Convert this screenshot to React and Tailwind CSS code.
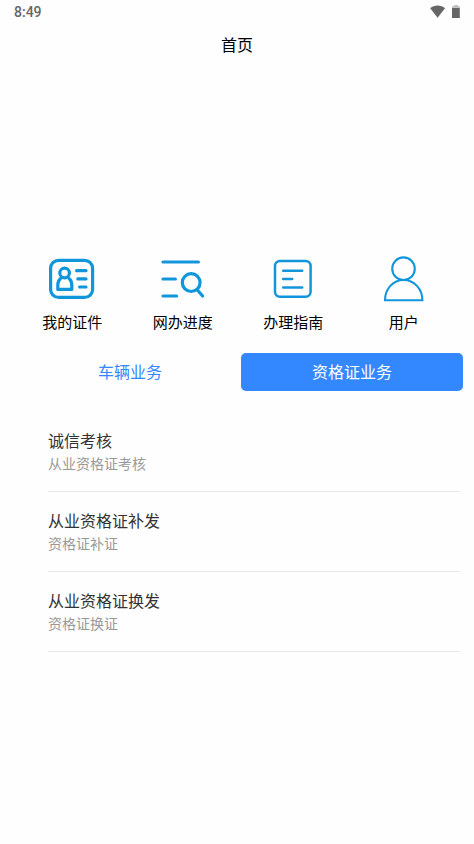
const services = [
  {
    label: "我的证件",
    icon: (
      <svg viewBox="0 0 48 48" className="size-12" fill="none" stroke="#1296db" strokeWidth="3.2" strokeLinecap="round" aria-hidden="true">
        <rect x="2.6" y="5.4" width="42" height="37" rx="8" />
        <circle cx="16.6" cy="18" r="4.8" />
        <path d="M12.6 23.400C10.600 25 9.800 27.400 9.800 30.200v4.200h14v-4.200c0-2.800-.8-5.200-2.800-6.800" strokeLinejoin="round" />
        <path d="M28.600 15.700h9.400M29.800 23.900h8.200M31.600 32h6.400" />
      </svg>
    ),
  },
  {
    label: "网办进度",
    icon: (
      <svg viewBox="0 0 48 48" className="size-12" fill="none" stroke="#1296db" strokeWidth="3.2" strokeLinecap="round" aria-hidden="true">
        <path d="M4 7h35.400M4 24h12.400M4 41h13.600" />
        <circle cx="32.2" cy="27.6" r="8.9" />
        <path d="M38.600 35.200l5 5.800" />
      </svg>
    ),
  },
  {
    label: "办理指南",
    icon: (
      <svg viewBox="0 0 48 48" className="size-12" fill="none" stroke="#1296db" strokeWidth="2.5" strokeLinecap="round" aria-hidden="true">
        <rect x="6" y="6" width="35.6" height="35.8" rx="5" />
        <path d="M14.2 15.7h19M14.2 24h9M14.2 32.4h19" />
      </svg>
    ),
  },
  {
    label: "用户",
    icon: (
      <svg viewBox="0 0 48 48" className="size-12" fill="none" stroke="#1296db" strokeWidth="2.1" aria-hidden="true">
        <circle cx="23.5" cy="13.7" r="11.3" />
        <path d="M5 45.2C5 34 13 25 23.600 25s18.800 9 18.800 20.200Z" />
      </svg>
    ),
  },
];

const items = [
  { title: "诚信考核", detail: "从业资格证考核" },
  { title: "从业资格证补发", detail: "资格证补证" },
  { title: "从业资格证换发", detail: "资格证换证" },
];

function StatusBar() {
  return (
    <div className="flex h-6 items-center justify-between pr-3 pl-3.5 text-[#666666]">
      <span className="font-[Roboto,sans-serif] text-sm font-medium">8:49</span>
      <div className="flex items-center gap-1">
        <svg viewBox="0 0 16 14" className="h-3.5 w-4" fill="currentColor" aria-hidden="true">
          <path d="M7.600 12.800.2 3.200C2.200 1.400 4.800.4 7.600.4s5.400 1 7.400 2.800Z" />
        </svg>
        <svg viewBox="0 0 12 14" className="h-3.5 w-3" fill="currentColor" aria-hidden="true">
          <path d="M4 0h4v1.200h1.800V3H2V1.200h2Z" opacity="0.4" />
          <path d="M2 3h7.800v10H2Z" />
        </svg>
      </div>
    </div>
  );
}

export default function App() {
  return (
    <div className="min-h-screen bg-[#fefefe] font-['Noto_Sans_CJK_SC',sans-serif]">
      <StatusBar />
      <header className="flex h-10 items-center justify-center">
        <h1 className="text-base text-black">首页</h1>
      </header>
      <main className="pt-[191px]">
        <nav className="grid grid-cols-4 pr-[15px] pl-[17px]">
          {services.map((service) => (
            <button key={service.label} type="button" className="flex flex-col items-center gap-2">
              {service.icon}
              <span className="text-[15px] leading-[22px] text-black">{service.label}</span>
            </button>
          ))}
        </nav>
        <div className="mt-5 grid grid-cols-2 pr-[11px] pl-[19px]">
          <button type="button" className="h-[38px] rounded-[5px] pb-0.5 text-base text-[#3388ff]">
            车辆业务
          </button>
          <button type="button" className="h-[38px] rounded-[5px] bg-[#3388ff] pb-0.5 text-base text-white">
            资格证业务
          </button>
        </div>
        <ul className="mt-[21px] pr-3.5 pl-12">
          {items.map((item) => (
            <li key={item.title} className="border-b border-[#e8e8e8] pt-4 pb-[17px]">
              <h2 className="text-base leading-6 text-[#333333]">{item.title}</h2>
              <p className="text-sm leading-[22px] text-[#999999]">{item.detail}</p>
            </li>
          ))}
        </ul>
      </main>
    </div>
  );
}
